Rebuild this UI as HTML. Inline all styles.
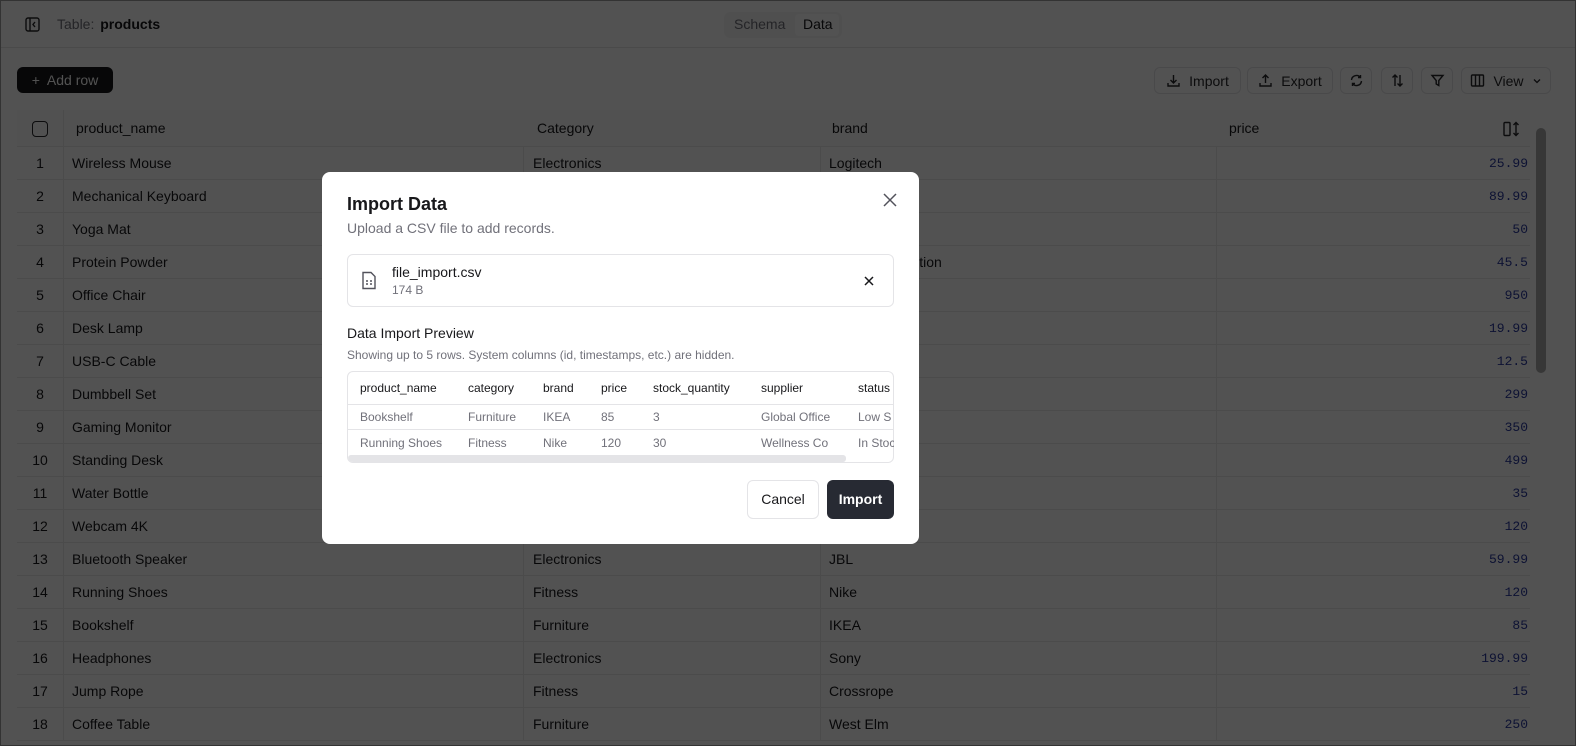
<!DOCTYPE html>
<html><head><meta charset="utf-8"><style>
*{box-sizing:border-box;margin:0;padding:0}
body{width:1576px;height:746px;overflow:hidden;font-family:"Liberation Sans",sans-serif;background:#fff;position:relative;color:#18181b}
.abs{position:absolute}
.hdr{left:0;top:0;width:1576px;height:48px;border-bottom:1px solid #e5e5e5}
.btn{position:absolute;top:67px;height:27px;border:1px solid #e4e4e7;border-radius:6px;font-size:14px;display:flex;align-items:center;justify-content:center;gap:8px;color:#27272a}
.tbl{left:17px;top:110px;width:1513px}
.row{position:absolute;left:0;width:1513px;height:33px;border-bottom:1px solid #e8e8e8;font-size:14px}
.row div{position:absolute;top:0;height:33px;line-height:33px;border-right:1px solid #e8e8e8}
.c0{left:0;width:47px;text-align:center}
.c1{left:47px;width:460px;padding-left:8px}
.c2{left:507px;width:297px;padding-left:9px}
.c3{left:804px;width:396px;padding-left:8px}
.c4{left:1200px;width:313px;padding-right:2px;text-align:right;font-family:"Liberation Mono",monospace;font-size:13px;color:#2b3a9e;border-right:none!important}
.ov{left:0;top:0;width:1576px;height:746px;background:rgba(0,0,0,0.68);border:1px solid #333}
.modal{left:322px;top:172px;width:597px;height:372px;background:#fff;border-radius:8px}
.pt{position:absolute;left:347px;width:547px;height:16px;font-size:12px;overflow:hidden;white-space:nowrap}
.pt span{position:absolute;top:0;white-space:nowrap}
</style></head><body>
<div class="abs hdr">
 <svg class="abs" style="left:25px;top:17px" width="15" height="15" viewBox="0 0 15 15" fill="none" stroke="#27272a" stroke-width="1.4"><rect x="1" y="1" width="13" height="13" rx="2"/><path d="M5 1v13M10 5l-2 2.5 2 2.5"/></svg>
 <div class="abs" style="left:57px;top:16px;font-size:14px;color:#71717a">Table: <b style="color:#18181b;margin-left:2px">products</b></div>
 <div class="abs" style="left:724px;top:12px;width:118px;height:26px;background:#f4f4f5;border-radius:6px"></div>
 <div class="abs" style="left:795px;top:14px;width:44px;height:22px;background:#fff;border-radius:4px"></div>
 <div class="abs" style="left:734px;top:16px;font-size:14px;color:#71717a">Schema</div>
 <div class="abs" style="left:803px;top:16px;font-size:14px">Data</div>
</div>
<div class="btn" style="left:17px;width:96px;background:#18181b;color:#fff;border:none;height:26px">+&nbsp; Add row</div>
<div class="btn" style="left:1154px;width:87px"><svg width="15" height="15" viewBox="0 0 15 15" fill="none" stroke="#27272a" stroke-width="1.4"><path d="M7.5 2v8M4.5 7l3 3 3-3M2 10v3h11v-3"/></svg>Import</div>
<div class="btn" style="left:1247px;width:86px"><svg width="15" height="15" viewBox="0 0 15 15" fill="none" stroke="#27272a" stroke-width="1.4"><path d="M7.5 10V2M4.5 5l3-3 3 3M2 10v3h11v-3"/></svg>Export</div>
<div class="btn" style="left:1340px;width:32px"><svg width="15" height="15" viewBox="0 0 15 15" fill="none" stroke="#27272a" stroke-width="1.4"><path d="M2.5 7a5 5 0 0 1 9-2.5M12.5 8a5 5 0 0 1-9 2.5M11.5 2v2.5H9M3.5 13v-2.5H6"/></svg></div>
<div class="btn" style="left:1381px;width:32px"><svg width="15" height="15" viewBox="0 0 15 15" fill="none" stroke="#27272a" stroke-width="1.4"><path d="M5 13V2M2.5 4.5 5 2l2.5 2.5M10 2v11M7.5 10.5 10 13l2.5-2.5"/></svg></div>
<div class="btn" style="left:1421px;width:32px"><svg width="15" height="15" viewBox="0 0 15 15" fill="none" stroke="#27272a" stroke-width="1.4"><path d="M2 2.5h11L8.8 7.5V12.5L6.2 11V7.5z"/></svg></div>
<div class="btn" style="left:1461px;width:90px"><svg width="15" height="15" viewBox="0 0 15 15" fill="none" stroke="#27272a" stroke-width="1.4"><rect x="1.5" y="2" width="12" height="11" rx="1"/><path d="M5.5 2v11M9.5 2v11"/></svg>View <svg width="10" height="10" viewBox="0 0 10 10" fill="none" stroke="#27272a" stroke-width="1.3"><path d="M2 3.5l3 3 3-3"/></svg></div>

<div class="abs tbl">
 <div class="row" style="top:0;height:37px;background:#fafafa"><div class="c0" style="height:37px;line-height:37px"><span style="display:inline-block;width:16px;height:16px;border:1.5px solid #27272a;border-radius:4px;vertical-align:middle"></span></div><div class="c1" style="height:37px;line-height:37px;padding-left:12px;border:none">product_name</div><div class="c2" style="height:37px;line-height:37px;padding-left:13px;border:none">Category</div><div class="c3" style="height:37px;line-height:37px;padding-left:11px;border:none">brand</div><div class="c4" style="height:37px;line-height:37px;text-align:left;padding-left:12px;font-family:'Liberation Sans';font-size:14px;color:#18181b">price<svg style="position:absolute;right:10px;top:11px" width="17" height="16" viewBox="0 0 17 16" fill="none" stroke="#27272a" stroke-width="1.4"><rect x="1" y="1.5" width="6" height="13" rx="1"/><path d="M13 1.5v13M10.5 4l2.5-2.5L15.5 4M10.5 12l2.5 2.5 2.5-2.5"/></svg></div></div>
 <div id="rows"></div>
</div>
<div class="abs" style="left:1536px;top:128px;width:10px;height:245px;background:#555;border-radius:5px;opacity:.5"></div>
<script>
var d=[["Wireless Mouse","Electronics","Logitech","25.99"],["Mechanical Keyboard","","","89.99"],["Yoga Mat","","","50"],["Protein Powder","","Optimum Nutrition","45.5"],["Office Chair","","","950"],["Desk Lamp","","","19.99"],["USB-C Cable","","","12.5"],["Dumbbell Set","","","299"],["Gaming Monitor","","","350"],["Standing Desk","","","499"],["Water Bottle","","","35"],["Webcam 4K","","","120"],["Bluetooth Speaker","Electronics","JBL","59.99"],["Running Shoes","Fitness","Nike","120"],["Bookshelf","Furniture","IKEA","85"],["Headphones","Electronics","Sony","199.99"],["Jump Rope","Fitness","Crossrope","15"],["Coffee Table","Furniture","West Elm","250"]];
var h="";d.forEach(function(r,i){h+='<div class="row" style="top:'+(37+i*33)+'px"><div class="c0">'+(i+1)+'</div><div class="c1">'+r[0]+'</div><div class="c2">'+r[1]+'</div><div class="c3">'+r[2]+'</div><div class="c4">'+r[3]+'</div></div>'});
document.getElementById("rows").innerHTML=h;
</script>
<div class="abs ov"></div>
<div class="abs modal"></div>
<div class="abs" style="left:347px;top:194px;font-size:18px;font-weight:bold;color:#18181b">Import Data</div>
<div class="abs" style="left:347px;top:220px;font-size:14px;color:#71717a">Upload a CSV file to add records.</div>
<svg class="abs" style="left:882px;top:192px" width="16" height="16" viewBox="0 0 16 16" stroke="#52525b" stroke-width="1.5"><path d="M2 2l12 12M14 2L2 14"/></svg>
<div class="abs" style="left:347px;top:254px;width:547px;height:53px;border:1px solid #e4e4e7;border-radius:6px"></div>
<svg class="abs" style="left:361px;top:271px" width="16" height="19" viewBox="0 0 16 19" fill="none" stroke="#52525b" stroke-width="1.4"><path d="M2 1.5h8l4 4v12H2z"/><path d="M5 10h2M9 10h2M5 13h2M9 13h2"/></svg>
<div class="abs" style="left:392px;top:264px;font-size:14px;color:#18181b">file_import.csv</div>
<div class="abs" style="left:392px;top:283px;font-size:12px;color:#71717a">174 B</div>
<svg class="abs" style="left:864px;top:276px" width="10" height="10" viewBox="0 0 10 10" stroke="#18181b" stroke-width="1.5"><path d="M1 1l8 8M9 1L1 9"/></svg>
<div class="abs" style="left:347px;top:325px;font-size:14px;color:#18181b">Data Import Preview</div>
<div class="abs" style="left:347px;top:348px;font-size:12px;color:#71717a">Showing up to 5 rows. System columns (id, timestamps, etc.) are hidden.</div>
<div class="abs" style="left:347px;top:371px;width:547px;height:92px;border:1px solid #e4e4e7;border-radius:6px;overflow:hidden">
 <div class="abs" style="left:0;top:32px;width:547px;border-top:1px solid #e4e4e7"></div>
 <div class="abs" style="left:0;top:57px;width:547px;border-top:1px solid #e4e4e7"></div>
 <div class="abs" style="left:0;top:83px;width:498px;height:7px;background:#e4e4e7;border-radius:3px"></div>
</div>
<div class="pt" style="top:381px;color:#18181b"><span style="left:13px">product_name</span><span style="left:121px">category</span><span style="left:196px">brand</span><span style="left:254px">price</span><span style="left:306px">stock_quantity</span><span style="left:414px">supplier</span><span style="left:511px">status</span></div>
<div class="pt" style="top:410px;color:#71717a"><span style="left:13px">Bookshelf</span><span style="left:121px">Furniture</span><span style="left:196px">IKEA</span><span style="left:254px">85</span><span style="left:306px">3</span><span style="left:414px">Global Office</span><span style="left:511px">Low S</span></div>
<div class="pt" style="top:436px;color:#71717a"><span style="left:13px">Running Shoes</span><span style="left:121px">Fitness</span><span style="left:196px">Nike</span><span style="left:254px">120</span><span style="left:306px">30</span><span style="left:414px">Wellness Co</span><span style="left:511px">In Stoc</span></div>
<div class="abs" style="left:747px;top:480px;width:72px;height:39px;border:1px solid #e4e4e7;border-radius:6px;font-size:14px;line-height:37px;text-align:center;color:#18181b">Cancel</div>
<div class="abs" style="left:827px;top:480px;width:67px;height:39px;background:#272a33;border-radius:6px;font-size:14px;line-height:39px;text-align:center;color:#fff;font-weight:bold">Import</div>
</body></html>
